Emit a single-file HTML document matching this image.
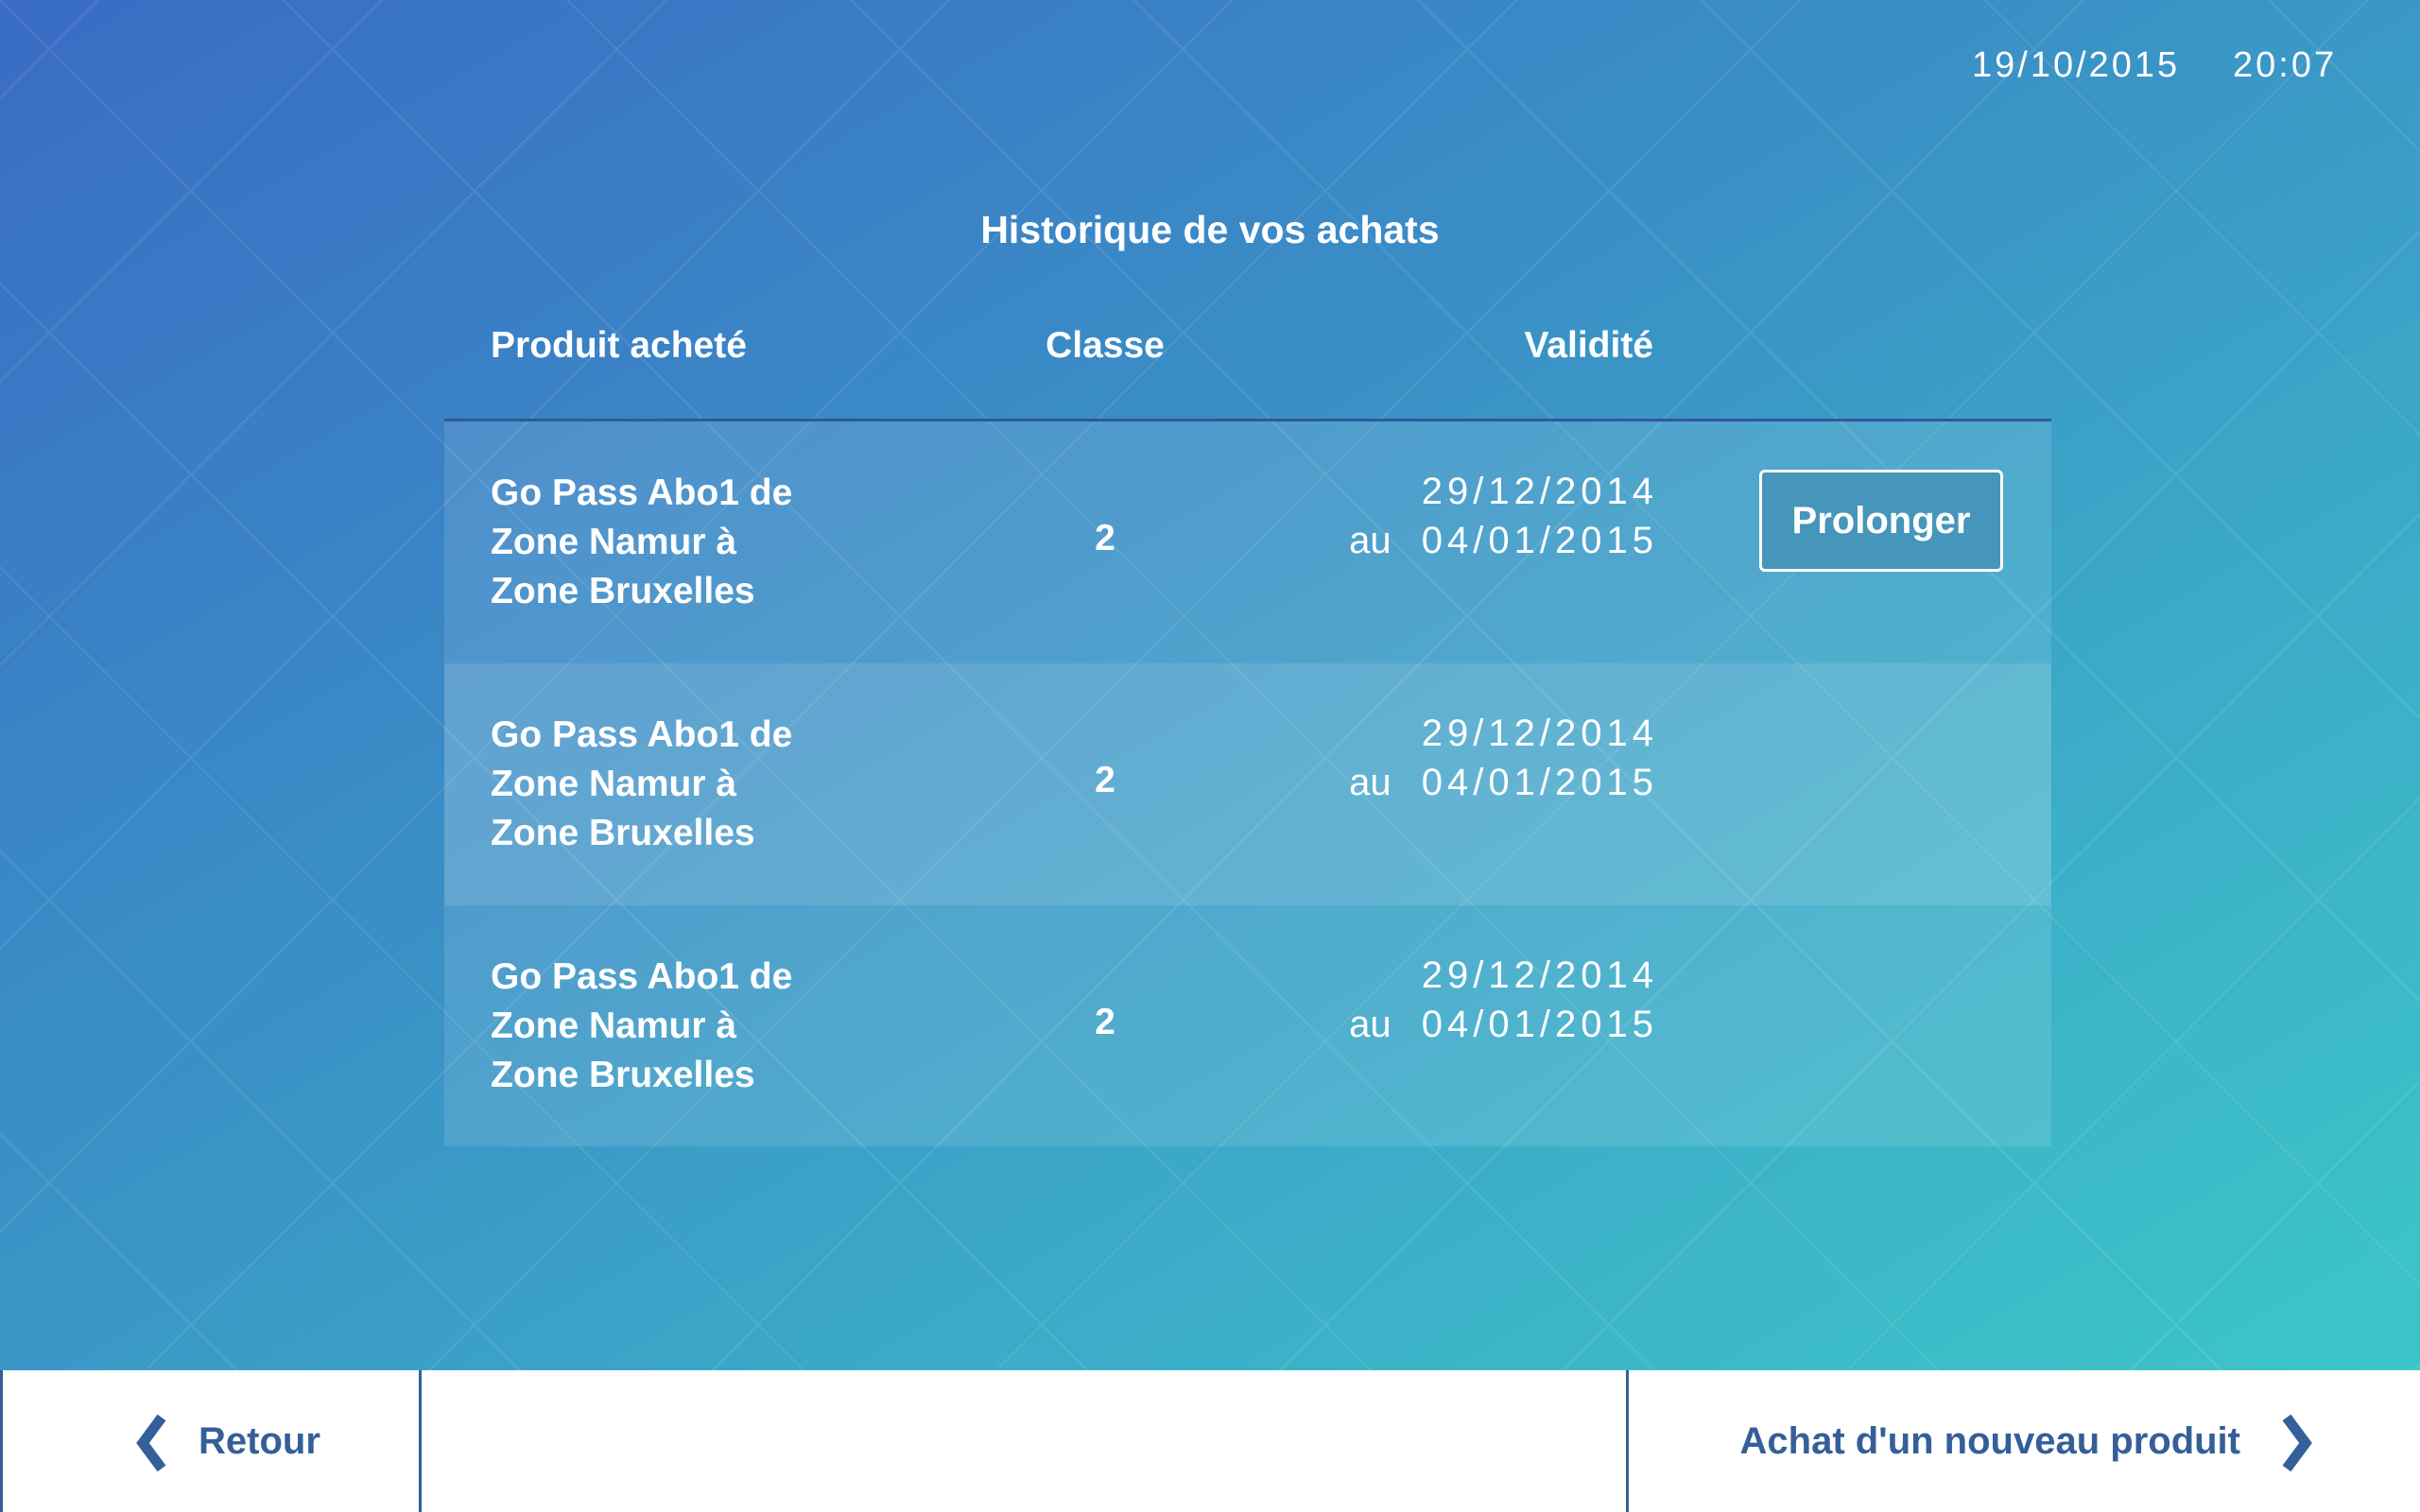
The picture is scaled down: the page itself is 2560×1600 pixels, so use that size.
<!DOCTYPE html>
<html><head><meta charset="utf-8"><style>
html,body{margin:0;padding:0}
body{width:2560px;height:1600px;position:relative;overflow:hidden;font-family:"Liberation Sans",sans-serif;color:#fff;
background:linear-gradient(150deg,#3a6cc4 0%,#3a90c6 40%,#3cb4c8 75%,#3ccac8 100%);}
svg.bg{position:absolute;left:0;top:0}
.abs{position:absolute;white-space:nowrap}
.t{font-size:39px;line-height:52px;font-weight:bold}
.row{position:absolute;left:470px;width:1700px}
.date{font-size:40px;letter-spacing:5px;text-align:right;font-weight:normal}
.bar{position:absolute;left:0;top:1450px;width:2560px;height:150px;background:#fff}
.bl{position:absolute;top:0;width:3px;height:150px;background:#345f98}
.btxt{position:absolute;color:#345f98;font-size:40px;top:50px;line-height:50px;font-weight:bold}
</style></head><body>
<svg class="bg" width="2560" height="1450">
<defs><pattern id="p" width="300" height="300" patternUnits="userSpaceOnUse" x="-98" y="-98">
<path d="M0 0L300 300M300 0L0 300" stroke="#fff" stroke-opacity="0.09" stroke-width="2" fill="none"/></pattern></defs>
<rect width="2560" height="1450" fill="url(#p)"/>
</svg>
<div class="abs" style="left:2086px;top:48px;font-size:38px;letter-spacing:3px">19/10/2015</div>
<div class="abs" style="left:2362px;top:48px;font-size:38px;letter-spacing:3px">20:07</div>
<div class="abs" style="left:0;width:2560px;text-align:center;top:220px;font-size:41px;font-weight:bold">Historique de vos achats</div>
<div class="abs t" style="left:519px;top:340px">Produit acheté</div>
<div class="abs t" style="left:1069px;width:200px;text-align:center;top:340px">Classe</div>
<div class="abs t" style="left:1500px;top:340px;width:249px;text-align:right">Validité</div>
<div class="abs" style="left:470px;top:443px;width:1700px;height:3px;background:#2f5a98"></div>

<div class="row" style="top:446px;height:256px;background:rgba(255,255,255,0.11)"></div>
<div class="row" style="top:702px;height:256px;background:rgba(255,255,255,0.2)"></div>
<div class="row" style="top:958px;height:255px;background:rgba(255,255,255,0.11)"></div>

<div class="abs t" style="left:519px;top:496px">Go Pass Abo1 de<br>Zone Namur à<br>Zone Bruxelles</div>
<div class="abs t" style="left:1069px;width:200px;text-align:center;top:544px">2</div>
<div class="abs date t" style="left:1300px;width:454px;top:494px">29/12/2014<br><span style="letter-spacing:0">au</span>&nbsp;&nbsp;04/01/2015</div>
<div class="abs" style="left:1861px;top:497px;width:252px;height:102px;border:3px solid #fff;border-radius:6px;background:#4596ba;text-align:center;line-height:102px;font-size:40px;font-weight:bold">Prolonger</div>

<div class="abs t" style="left:519px;top:752px">Go Pass Abo1 de<br>Zone Namur à<br>Zone Bruxelles</div>
<div class="abs t" style="left:1069px;width:200px;text-align:center;top:800px">2</div>
<div class="abs date t" style="left:1300px;width:454px;top:750px">29/12/2014<br><span style="letter-spacing:0">au</span>&nbsp;&nbsp;04/01/2015</div>

<div class="abs t" style="left:519px;top:1008px">Go Pass Abo1 de<br>Zone Namur à<br>Zone Bruxelles</div>
<div class="abs t" style="left:1069px;width:200px;text-align:center;top:1056px">2</div>
<div class="abs date t" style="left:1300px;width:454px;top:1006px">29/12/2014<br><span style="letter-spacing:0">au</span>&nbsp;&nbsp;04/01/2015</div>

<div class="bar">
<div class="bl" style="left:0"></div>
<div class="bl" style="left:443px"></div>
<div class="bl" style="left:1720px"></div>
<svg style="position:absolute;left:140px;top:46px" width="40" height="62"><path d="M31 4L11 31L31 58" stroke="#345f98" stroke-width="11" fill="none"/></svg>
<div class="btxt" style="left:210px">Retour</div>
<div class="btxt" style="right:190px">Achat d'un nouveau produit</div>
<svg style="position:absolute;left:2410px;top:46px" width="40" height="62"><path d="M9 4L29 31L9 58" stroke="#345f98" stroke-width="11" fill="none"/></svg>
</div>
</body></html>
